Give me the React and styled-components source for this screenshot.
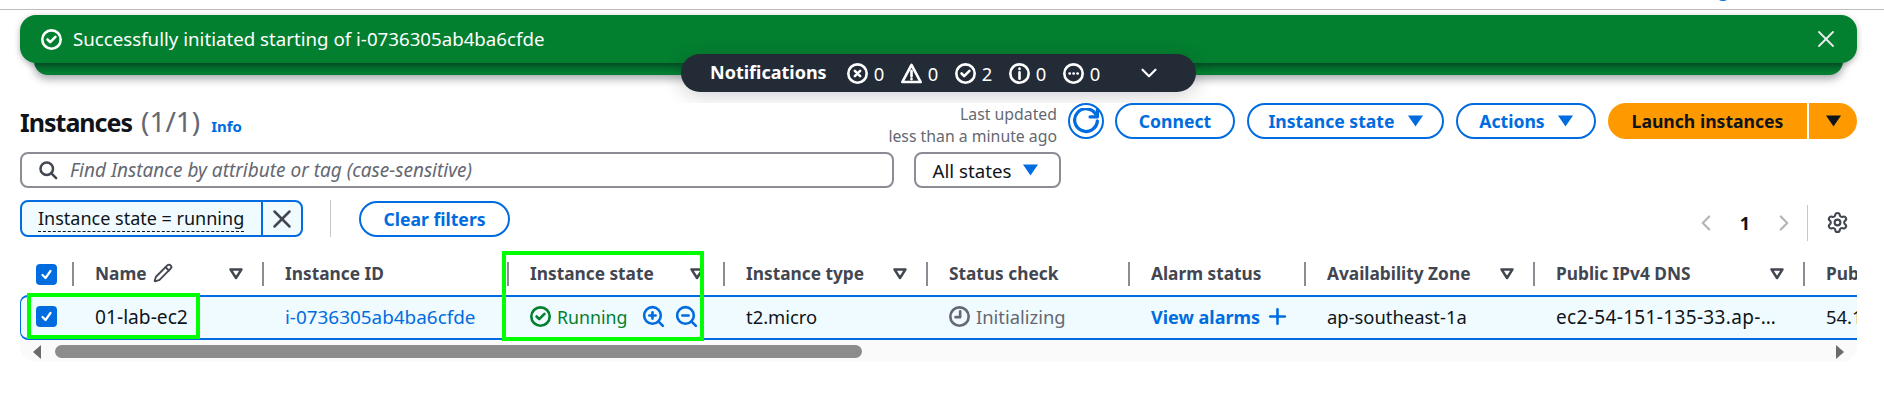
import React from 'react';
import styled, { createGlobalStyle } from 'styled-components';
import { Settings, Pencil, ZoomIn, ZoomOut, ChevronLeft, ChevronRight, ChevronDown, Plus, X } from 'lucide-react';

const Global = createGlobalStyle`
  html, body { margin: 0; padding: 0; background: #fff; }
  * { box-sizing: border-box; }
  body { font-family: "Noto Sans", "Open Sans", sans-serif; font-size: 18.4px; color: #0f141a; }
`;

const BLUE = '#006ce0';

const Page = styled.div`
  position: relative;
  width: 1884px;
  height: 415px;
  overflow: hidden;
  background: #fff;
`;
const TopBar = styled.div`
  position: relative;
  height: 10px;
  border-bottom: 1px solid #bdbdbd;
`;
const TopDot = styled.span`
  position: absolute;
  left: 1716px;
  top: -10px;
  width: 14px;
  height: 11px;
  border-radius: 50%;
  background: ${BLUE};
`;
const FlashArea = styled.div`
  position: relative;
  height: 93px;
  padding: 5px 27px 0 20px;
`;
const FlashStack = styled.div`
  position: absolute;
  left: 34px;
  right: 41px;
  top: 25px;
  height: 40px;
  border-radius: 0 0 14px 14px;
  background: linear-gradient(#04612a 0, #037f30 10px);
  background-position: 0 28px;
  background-repeat: no-repeat;
  background-color: #037f30;
  box-shadow: 0 4px 8px rgba(0, 7, 22, 0.35);
`;
const Flash = styled.div`
  position: relative;
  display: flex;
  align-items: center;
  height: 48px;
  padding: 0 17px 0 21px;
  gap: 11px;
  border-radius: 16px;
  background: #037f30;
  color: #fff;
  box-shadow: 0 2px 6px rgba(0, 7, 22, 0.3);
`;
const FlashText = styled.span`
  flex: 1;
  font-size: 18.7px;
  margin-top: -2px;
`;
const NotifyBar = styled.div`
  position: absolute;
  left: 681px;
  top: 44px;
  width: 515px;
  height: 38px;
  display: flex;
  align-items: center;
  padding-left: 29px;
  border-radius: 19px;
  background: #232b37;
  color: #fff;
  box-shadow: 0 4px 20px rgba(0, 7, 22, 0.18);
`;
const NotifyTitle = styled.strong`
  font-size: 18px;
  font-weight: 700;
  margin-right: 20px;
  margin-top: -2px;
`;
const Count = styled.span`
  display: flex;
  align-items: center;
  gap: 6px;
  width: 54px;
  font-size: 18.4px;
`;
const Content = styled.div`
  position: relative;
  background: #fff;
  padding: 0 27px 0 20px;
`;
const HeadRow = styled.div`
  display: flex;
  align-items: flex-start;
  height: 36px;
`;
const Title = styled.h1`
  margin: 0;
  flex: 1;
  font-size: 25px;
  line-height: 36px;
  font-weight: 700;
  letter-spacing: -1px;
  white-space: nowrap;
`;
const TitleCount = styled.span`
  font-weight: 400;
  font-size: 28px;
  letter-spacing: 0;
  color: #656871;
  margin-left: 9px;
`;
const InfoLink = styled.a`
  font-size: 15px;
  font-weight: 700;
  letter-spacing: 0;
  color: ${BLUE};
  margin-left: 11px;
`;
const Updated = styled.div`
  width: 200px;
  margin-right: 11px;
  text-align: right;
  font-size: 15.8px;
  line-height: 22px;
  color: #656871;
  white-space: nowrap;
`;
const Pill = styled.button`
  display: inline-flex;
  align-items: center;
  justify-content: center;
  gap: 13px;
  width: ${p => p.$w}px;
  height: 36px;
  margin-right: ${p => p.$mr ?? 12}px;
  padding: 0;
  border: 2px solid ${BLUE};
  border-radius: 18px;
  background: #fff;
  color: ${BLUE};
  font: 700 17.6px "Noto Sans", sans-serif;
  white-space: nowrap;
`;
const RoundBtn = styled(Pill)`
  border-radius: 50%;
`;
const Launch = styled.div`
  display: flex;
  width: 249px;
  height: 36px;
  border-radius: 18px;
  overflow: hidden;
  background: #ff9900;
  color: #0f141a;
  font-weight: 700;
  font-size: 17.6px;
`;
const LaunchMain = styled.span`
  display: flex;
  align-items: center;
  justify-content: center;
  width: 201px;
  border-right: 2px solid #fff;
`;
const LaunchCaret = styled.span`
  flex: 1;
  display: flex;
  align-items: center;
  justify-content: center;
`;
const SearchRow = styled.div`
  display: flex;
  gap: 20px;
  margin-top: 13px;
`;
const Search = styled.div`
  display: flex;
  align-items: center;
  gap: 12px;
  width: 874px;
  height: 36px;
  padding-left: 16px;
  border: 2px solid #8c8c94;
  border-radius: 8px;
  font-style: italic;
  font-size: 19px;
  color: #656871;
`;
const Select = styled.div`
  display: flex;
  align-items: center;
  justify-content: center;
  gap: 12px;
  width: 147px;
  height: 36px;
  padding-right: 4px;
  border: 2px solid #8c8c94;
  border-radius: 8px;
  font-size: 18.7px;
`;
const FilterRow = styled.div`
  display: flex;
  align-items: center;
  margin-top: 12px;
  height: 37px;
`;
const Token = styled.div`
  display: flex;
  width: 283px;
  height: 37px;
  border: 2px solid ${BLUE};
  border-radius: 8px;
  background: #f0fbff;
`;
const TokenLabel = styled.span`
  display: flex;
  align-items: center;
  width: 241px;
  padding-left: 16px;
  border-right: 2px solid ${BLUE};
`;
const Dotted = styled.span`
  border-bottom: 1px dashed #0f141a;
  line-height: 25px;
  font-size: 18px;
`;
const TokenClose = styled.span`
  flex: 1;
  display: flex;
  align-items: center;
  justify-content: center;
  color: #424650;
`;
const VRule = styled.span`
  width: 1px;
  height: 37px;
  background: #c6c6cd;
  margin: 0 28px 0 27px;
`;
const Pager = styled.div`
  margin-left: auto;
  margin-right: 8px;
  display: flex;
  align-items: center;
  height: 37px;
  transform: translateY(4px);
`;
const PageNum = styled.strong`
  width: 52px;
  text-align: center;
  font-size: 18px;
`;
const PagerGear = styled.span`
  display: flex;
  align-items: center;
  margin-left: 10px;
  padding-left: 18px;
  border-left: 1px solid #c6c6cd;
  height: 36px;
  color: #424650;
`;
const Table = styled.div`
  position: relative;
  margin-top: 14px;
  width: 1837px;
  overflow: hidden;
`;
const cols = '52px 190px 245px 216px 203px 202px 176px 229px 270px 100px';
const HeaderRow = styled.div`
  display: grid;
  grid-template-columns: ${cols};
  height: 44px;
`;
const HeadCell = styled.div`
  position: relative;
  display: flex;
  align-items: center;
  height: 24px;
  margin-top: 11px;
  padding: 0 0 2px 21px;
  font-weight: 700;
  font-size: 17.3px;
  color: #424650;
  white-space: nowrap;
  border-left: ${p => (p.$first ? 'none' : '2px solid #8c8c94')};
`;
const SortWrap = styled.span`
  position: absolute;
  right: 19px;
  top: 6px;
  display: flex;
`;
const Check = styled.span`
  display: flex;
  align-items: center;
  justify-content: center;
  width: 21px;
  height: 21px;
  border-radius: 4px;
  background: ${BLUE};
  margin-left: 16px;
`;
const DataRow = styled.div`
  display: grid;
  grid-template-columns: ${cols};
  align-items: center;
  height: 45px;
  border-top: 2px solid ${BLUE};
  border-bottom: 2px solid ${BLUE};
  border-left: 1px solid ${BLUE};
  border-radius: 8px 0 0 8px;
  background: #f0fbff;
`;
const Cell = styled.div`
  padding: 0 0 2px ${p => p.$pl ?? 22}px;
  white-space: nowrap;
  display: flex;
  align-items: center;
  gap: ${p => p.$gap ?? 6}px;
  color: ${p => p.$color || '#0f141a'};
  font-weight: ${p => (p.$bold ? 700 : 400)};
  font-size: ${p => p.$fs ?? 18.4}px;
  letter-spacing: ${p => p.$ls ?? 0}px;
`;
const Scroll = styled.div`
  position: relative;
  height: 22px;
  background: #fafafa;
  border-radius: 0 0 16px 16px;
  padding: 5px 0 0 35px;
`;
const Thumb = styled.div`
  width: 807px;
  height: 13px;
  border-radius: 7px;
  background: #8c8c8c;
`;
const Arrow = styled.span`
  position: absolute;
  top: 5px;
  ${p => p.$side}: 13px;
  width: 0;
  height: 0;
  border-top: 7px solid transparent;
  border-bottom: 7px solid transparent;
  ${p => (p.$side === 'left' ? 'border-right: 8px solid #6b6b6b;' : 'border-left: 8px solid #6b6b6b;')}
`;
const Highlight = styled.div`
  position: absolute;
  left: ${p => p.$x}px;
  top: ${p => p.$y}px;
  width: ${p => p.$w}px;
  height: ${p => p.$h}px;
  border: 4px solid #00ff00;
  pointer-events: none;
`;

const Svg = ({ size = 20, sw = 2, children, color = 'currentColor' }) => (
  <svg width={size} height={size} viewBox="0 0 16 16" fill="none" stroke={color} strokeWidth={sw} strokeLinecap="round" strokeLinejoin="round">
    {children}
  </svg>
);
const CheckCircle = p => <Svg {...p}><circle cx="8" cy="8" r="7" /><path d="M5 8l2 2 4-4" /></Svg>;
const XCircle = p => <Svg {...p}><circle cx="8" cy="8" r="7" /><path d="M6 6l4 4M10 6l-4 4" /></Svg>;
const Warn = p => <Svg {...p}><path d="M8 1.5L15 14.5H1z" /><path d="M8 6v4M8 12v.4" /></Svg>;
const InfoIc = p => <Svg {...p}><circle cx="8" cy="8" r="7" /><path d="M8 7v5M8 4.2v.4" /></Svg>;
const More = p => <Svg {...p}><circle cx="8" cy="8" r="7" /><path d="M5 8h.2M8 8h.2M11 8h.2" /></Svg>;
const Clock = p => <Svg {...p}><circle cx="8" cy="8" r="7" /><path d="M8.5 4v4.5H5" /></Svg>;
const Mag = p => <Svg {...p}><circle cx="7" cy="7" r="5" /><path d="M14.5 14.5l-4-4" /></Svg>;
const Refresh = p => <Svg {...p}><path d="M10.5 5.5h4.5V1" /><path d="M15 8a7 7 0 1 1-1-4.2" /></Svg>;
const Caret = ({ color = BLUE }) => (
  <svg width="15" height="12" viewBox="0 0 15 12"><path d="M0 0.5h15L7.5 11.5z" fill={color} /></svg>
);
const Sort = () => (
  <svg width="14" height="12" viewBox="0 0 14 12" fill="none"><path d="M1.5 1.4h11L7 10z" stroke="#424650" strokeWidth="2.5" strokeLinejoin="round" /></svg>
);
const Tick = () => (
  <svg width="13" height="13" viewBox="0 0 13 13" fill="none" stroke="#fff" strokeWidth="2.2" strokeLinecap="round" strokeLinejoin="round"><path d="M2.5 7l3 3 5-7" /></svg>
);

const headers = [
  ['Instance ID', false],
  ['Instance state', true],
  ['Instance type', true],
  ['Status check', false],
  ['Alarm status', false],
  ['Availability Zone', true],
  ['Public IPv4 DNS', true],
  ['Public IPv4 address', false],
];
const counts = [[XCircle, 0], [Warn, 0], [CheckCircle, 2], [InfoIc, 0], [More, 0]];

export default function App() {
  return (
    <Page>
      <Global />
      <TopBar><TopDot /></TopBar>
      <FlashArea>
        <FlashStack />
        <Flash>
          <CheckCircle size={21} />
          <FlashText>Successfully initiated starting of i-0736305ab4ba6cfde</FlashText>
          <X size={28} strokeWidth={1.6} color="#e9ebed" />
        </Flash>
        <NotifyBar>
          <NotifyTitle>Notifications</NotifyTitle>
          {counts.map(([Ic, n], i) => <Count key={i}><Ic size={21} />{n}</Count>)}
          <ChevronDown size={26} style={{ marginLeft: 19 }} />
        </NotifyBar>
      </FlashArea>
      <Content>
        <HeadRow>
          <Title>Instances<TitleCount>(1/1)</TitleCount><InfoLink>Info</InfoLink></Title>
          <Updated>Last updated<br />less than a minute ago</Updated>
          <RoundBtn $w={36} $mr={11}><Refresh size={26} /></RoundBtn>
          <Pill $w={120}>Connect</Pill>
          <Pill $w={197}>Instance state<Caret /></Pill>
          <Pill $w={140}>Actions<Caret /></Pill>
          <Launch>
            <LaunchMain>Launch instances</LaunchMain>
            <LaunchCaret><Caret color="#0f141a" /></LaunchCaret>
          </Launch>
        </HeadRow>
        <SearchRow>
          <Search><Mag size={20} color="#424650" />Find Instance by attribute or tag (case-sensitive)</Search>
          <Select>All states<Caret /></Select>
        </SearchRow>
        <FilterRow>
          <Token>
            <TokenLabel><Dotted>Instance state = running</Dotted></TokenLabel>
            <TokenClose><X size={30} strokeWidth={2} /></TokenClose>
          </Token>
          <VRule />
          <Pill $w={151}>Clear filters</Pill>
          <Pager>
            <ChevronLeft size={26} color="#b4b4bb" />
            <PageNum>1</PageNum>
            <ChevronRight size={26} color="#b4b4bb" />
            <PagerGear><Settings size={23} strokeWidth={2.2} /></PagerGear>
          </Pager>
        </FilterRow>
        <Table>
          <HeaderRow>
            <HeadCell $first style={{ padding: 0 }}><Check><Tick /></Check></HeadCell>
            <HeadCell>Name<Pencil size={20} strokeWidth={2.2} style={{ marginLeft: 6 }} /><SortWrap><Sort /></SortWrap></HeadCell>
            {headers.map(([t, s]) => (
              <HeadCell key={t}>{t}{s && <SortWrap><Sort /></SortWrap>}</HeadCell>
            ))}
          </HeaderRow>
          <DataRow>
            <Cell $pl={15}><Check style={{ margin: 0 }}><Tick /></Check></Cell>
            <Cell $fs={19.2}>01-lab-ec2</Cell>
            <Cell $color={BLUE} $fs={18.9}>i-0736305ab4ba6cfde</Cell>
            <Cell $color="#037f30" $fs={17.8}>
              <CheckCircle size={21} />Running
              <ZoomIn size={25} color={BLUE} strokeWidth={2.5} style={{ marginLeft: 7 }} />
              <ZoomOut size={25} color={BLUE} strokeWidth={2.5} style={{ marginLeft: 2 }} />
            </Cell>
            <Cell>t2.micro</Cell>
            <Cell $color="#656871"><Clock size={21} />Initializing</Cell>
            <Cell $color={BLUE} $bold $fs={18} $gap={5}>View alarms<Plus size={25} strokeWidth={2.5} /></Cell>
            <Cell>ap-southeast-1a</Cell>
            <Cell $fs={19} $ls={0.35}>ec2-54-151-135-33.ap-…</Cell>
            <Cell>54.151.135.33</Cell>
          </DataRow>
          <Scroll>
            <Arrow $side="left" />
            <Thumb />
            <Arrow $side="right" />
          </Scroll>
        </Table>
      </Content>
      <Highlight $x={27} $y={293} $w={173} $h={46} />
      <Highlight $x={502} $y={251} $w={202} $h={90} />
    </Page>
  );
}
